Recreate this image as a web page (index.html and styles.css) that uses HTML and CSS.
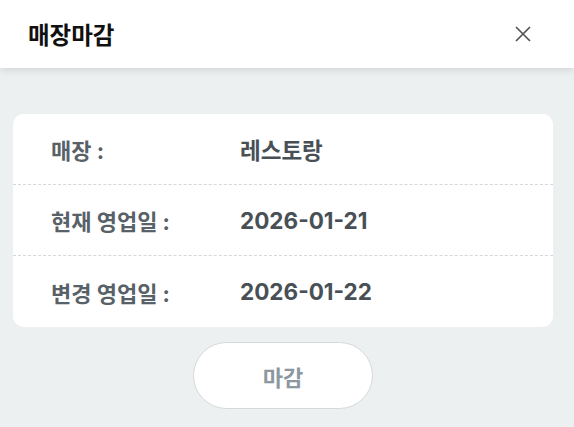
FILE: index.html
```html
<!DOCTYPE html>
<html lang="ko">
<head>
<meta charset="utf-8">
<link rel="stylesheet" href="styles.css">
</head>
<body>
<header class="header">
  <h1 class="title">매장마감</h1>
  <button class="close" aria-label="닫기">
    <svg width="16" height="16" viewBox="0 0 16 16"><path d="M1 1 L15 15 M15 1 L1 15" stroke="#555" stroke-width="1.7" fill="none"/></svg>
  </button>
</header>
<main class="content">
  <section class="card">
    <div class="row"><span class="label">매장 :</span><span class="value">레스토랑</span></div>
    <div class="row"><span class="label">현재 영업일 :</span><span class="value">2026-01-21</span></div>
    <div class="row row-last"><span class="label">변경 영업일 :</span><span class="value">2026-01-22</span></div>
  </section>
  <div class="actions">
    <button class="btn">마감</button>
  </div>
</main>
</body>
</html>
```
FILE: styles.css
```css
* { box-sizing: border-box; }
html, body { margin: 0; padding: 0; height: 100%; }
body {
  background: #edf0f1;
  font-family: "Inter", "Noto Sans CJK KR", "Noto Sans", sans-serif;
  overflow: hidden;
}
.header {
  height: 68px;
  background: #fff;
  display: flex;
  align-items: center;
  justify-content: space-between;
  padding: 0 43px 0 28px;
  box-shadow: 0 2px 8px rgba(0,0,0,0.12);
  position: relative;
}
.title {
  margin: 0;
  font-size: 23.5px;
  font-weight: 700;
  color: #111;
}
.close {
  border: 0;
  background: none;
  padding: 0;
  display: flex;
}
.content {
  padding: 46px 21px 0 13px;
}
.card {
  background: #fff;
  border-radius: 11px;
}
.row {
  height: 71px;
  display: flex;
  align-items: center;
  padding-left: 38px;
  border-top: 1px dashed #d3d8db;
}
.row:first-child { border-top: 0; height: 70px; }
.row-last { height: 72px; }
.label {
  width: 189px;
  font-size: 22px;
  font-weight: 700;
  color: #586168;
}
.value {
  font-size: 22.5px;
  font-weight: 700;
  color: #485056;
}
.actions {
  display: flex;
  justify-content: center;
  padding-top: 15px;
}
.btn {
  width: 180px;
  height: 67px;
  border-radius: 34px;
  border: 1px solid #d6d9db;
  background: #fff;
  font-family: inherit;
  font-size: 22px;
  font-weight: 700;
  color: #8d979e;
}
```
